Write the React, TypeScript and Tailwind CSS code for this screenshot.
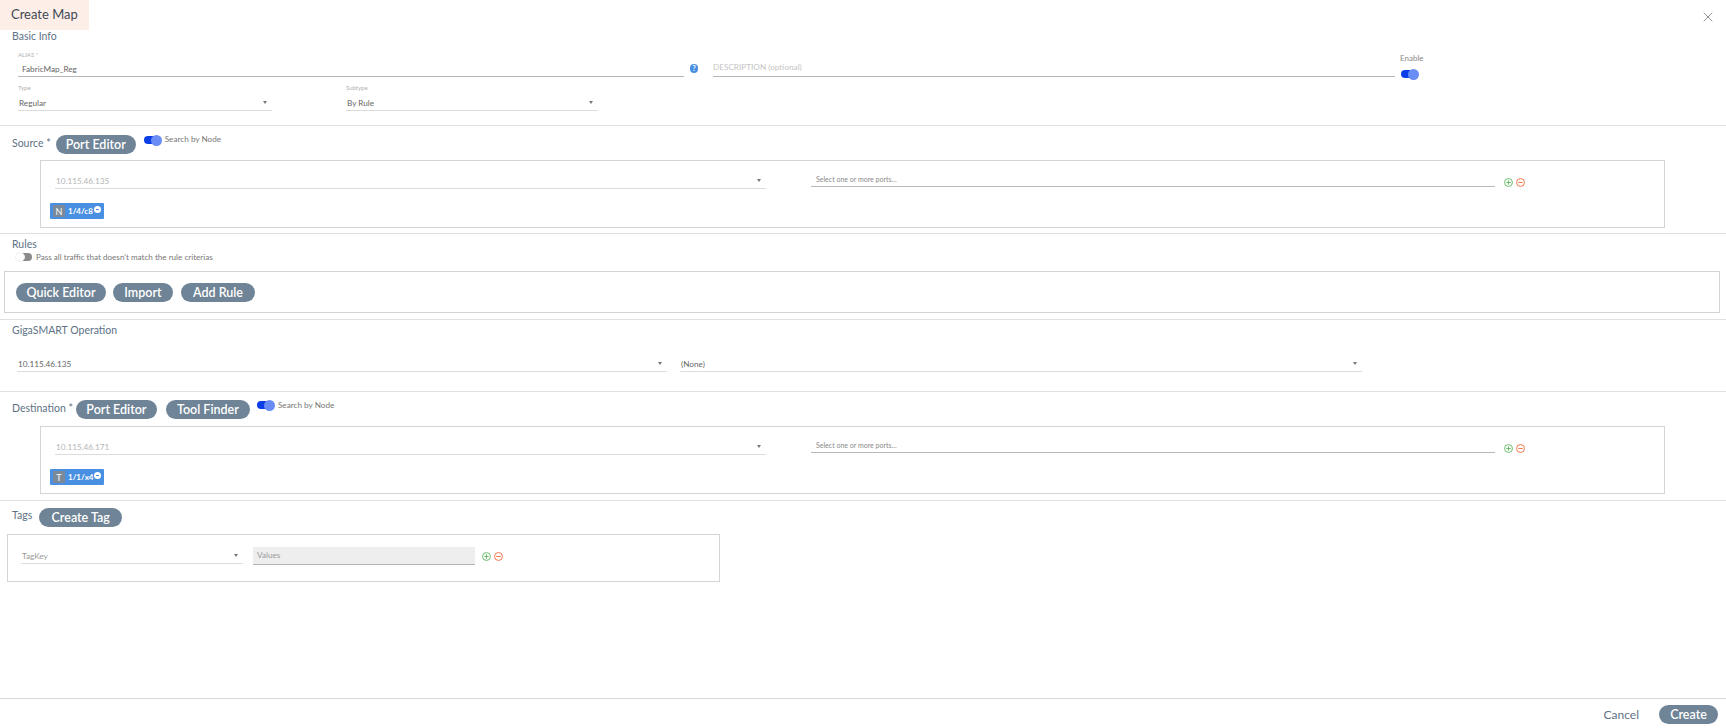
import React from 'react';
import { X } from 'lucide-react';

function Pill({ children, className = '' }: { children: React.ReactNode; className?: string }) {
  return (
    <button className={`h-[19px] rounded-full bg-[#6f8496] text-[12.5px] font-semibold leading-[19px] text-white ${className}`}>
      {children}
    </button>
  );
}

function Toggle({ on = true }: { on?: boolean }) {
  if (!on) {
    return (
      <span className="relative block h-[8px] w-[16px] rounded-full bg-[#8a8a8a]">
        <span className="absolute -left-[1px] -top-[1px] h-[10px] w-[10px] rounded-full border border-[#f0f0f0] bg-white" />
      </span>
    );
  }
  return (
    <span className="relative block h-[8px] w-[16px] rounded-full bg-[#0b3fe6]">
      <span className="absolute -top-[1.5px] left-[7px] h-[11px] w-[11px] rounded-full bg-[#6a8df5]" />
    </span>
  );
}

function Caret() {
  return <span className="mb-[4px] h-0 w-0 self-end border-x-[2px] border-t-[3px] border-x-transparent border-t-[#777]" />;
}

function SelectLine({ value, muted = false, className = 'h-[22px]' }: { value: string; muted?: boolean; className?: string }) {
  return (
    <div className={`flex items-end justify-between border-b border-[#dcdcdc] pb-[2px] pr-[5px] pl-[1px] text-[8.2px] leading-[10px] ${muted ? 'text-[#b5b5b5]' : 'text-[#666]'} ${className}`}>
      <span>{value}</span>
      <Caret />
    </div>
  );
}

function PlusMinus() {
  return (
    <div className="flex gap-[3px]">
      <svg width="9" height="9" viewBox="0 0 10 10" fill="none" stroke="#5cb85c" strokeWidth="1">
        <circle cx="5" cy="5" r="4.4" />
        <path d="M2.5 5h5M5 2.5v5" />
      </svg>
      <svg width="9" height="9" viewBox="0 0 10 10" fill="none" stroke="#f4683c" strokeWidth="1">
        <circle cx="5" cy="5" r="4.4" />
        <path d="M2.5 5h5" />
      </svg>
    </div>
  );
}

function Chip({ letter, label }: { letter: string; label: string }) {
  return (
    <div className="flex h-[16px] w-[54px] items-center rounded-[1px] bg-[#4a90e2] pl-[3px] text-white">
      <span className="flex h-[12px] w-[12px] items-center justify-center bg-[#7b8a99] text-[9px] leading-none">{letter}</span>
      <span className="ml-[3px] text-[8px] font-bold">{label}</span>
      <span className="relative -top-[2px] ml-[1px] flex h-[7px] w-[7px] items-center justify-center rounded-full bg-white">
        <span className="h-[1px] w-[3px] bg-[#4a90e2]" />
      </span>
    </div>
  );
}

function PortBox({ node, letter, label }: { node: string; letter: string; label: string }) {
  return (
    <div className="ml-[40px] mr-[61px] h-[68px] border border-[#d4d4d4] pl-[9px]">
      <div className="flex items-start">
        <SelectLine value={node} muted className="ml-[5px] mt-[6px] h-[22px] w-[711px] pl-0" />
        <div className="ml-[45px] mt-[8px] flex h-[18px] w-[684px] items-end border-b border-[#b8b8b8] pb-[3px] pl-[5px] text-[7px] leading-[8px] text-[#8a8a8a]">
          Select one or more ports...
        </div>
        <div className="ml-[9px] mt-[17px]">
          <PlusMinus />
        </div>
      </div>
      <div className="mt-[14px]">
        <Chip letter={letter} label={label} />
      </div>
    </div>
  );
}

export default function App() {
  return (
    <div className="relative flex h-[728px] flex-col bg-white text-[#6a7a88] [font-family:Lato,sans-serif]">
      <X className="absolute right-[10px] top-[9px] h-[16px] w-[16px] text-[#777]" strokeWidth={1.2} />

      <div className="flex h-[30px] w-[89px] items-center bg-[#fdeee8] pl-[11px] text-[13px] text-[#3e4a54]">Create Map</div>

      {/* Basic info */}
      <section className="h-[96px] border-b border-[#e0e0e0]">
        <h2 className="pl-[12px] text-[10.5px] leading-[13px] text-[#5e7285]">Basic Info</h2>
        <div className="mt-[8px] flex items-start pl-[18px]">
          <div className="w-[666px]">
            <div className="text-[6px] leading-[8px] text-[#b0b0b0]">ALIAS *</div>
            <div className="h-[18px] border-b border-[#b5b5b5] pl-[4px] pt-[3px] text-[8.2px] leading-[14px] text-[#666]">FabricMap_Reg</div>
          </div>
          <span className="ml-[6px] mt-[13px] flex h-[9px] w-[8px] items-center justify-center rounded-full bg-[#4a90e2] text-[7px] font-bold leading-none text-white">?</span>
          <div className="ml-[15px] mt-[8px] h-[18px] w-[682px] border-b border-[#b5b5b5] pt-[1px] text-[8.2px] leading-[14px] text-[#c4c4c4]">DESCRIPTION (optional)</div>
          <div className="ml-[5px] mt-[2px]">
            <div className="text-[8px] leading-[10px] text-[#888]">Enable</div>
            <div className="ml-[1px] mt-[7px]"><Toggle /></div>
          </div>
        </div>
        <div className="mt-[6px] flex pl-[18px]">
          <div className="w-[254px]">
            <div className="text-[6px] leading-[8px] text-[#b0b0b0]">Type</div>
            <SelectLine value="Regular" className="h-[19px]" />
          </div>
          <div className="ml-[74px] w-[252px]">
            <div className="text-[6px] leading-[8px] text-[#b0b0b0]">Subtype</div>
            <SelectLine value="By Rule" className="h-[19px]" />
          </div>
        </div>
      </section>

      {/* Source */}
      <section className="h-[108px] border-b border-[#e0e0e0]">
        <div className="flex h-[34px] items-start pl-[12px] pt-[9px]">
          <span className="mt-[2px] text-[10.5px] leading-[13px] text-[#5e7285]">Source *</span>
          <Pill className="ml-[5px] w-[80px]">Port Editor</Pill>
          <span className="ml-[8px] mt-[1px]"><Toggle /></span>
          <span className="-mt-[1px] ml-[5px] text-[8.2px] leading-[10px] text-[#777]">Search by Node</span>
        </div>
        <PortBox node="10.115.46.135" letter="N" label="1/4/c8" />
      </section>

      {/* Rules */}
      <section className="h-[86px] border-b border-[#e0e0e0]">
        <h2 className="pl-[12px] pt-[4px] text-[10.5px] leading-[13px] text-[#5e7285]">Rules</h2>
        <div className="flex h-[12px] items-center pl-[16px]">
          <Toggle on={false} />
          <span className="ml-[4px] text-[8.1px] text-[#777]">Pass all traffic that doesn't match the rule criterias</span>
        </div>
        <div className="ml-[4px] mr-[6px] mt-[8px] flex h-[42px] items-center gap-[7px] border border-[#d4d4d4] pl-[11px]">
          <Pill className="w-[90px]">Quick Editor</Pill>
          <Pill className="w-[60px]">Import</Pill>
          <Pill className="ml-[1px] w-[74px]">Add Rule</Pill>
        </div>
      </section>

      {/* GigaSMART */}
      <section className="h-[72px] border-b border-[#e0e0e0]">
        <h2 className="pl-[12px] pt-[4px] text-[10.5px] leading-[13px] text-[#5e7285]">GigaSMART Operation</h2>
        <div className="mt-[13px] flex gap-[13px] pl-[17px]">
          <SelectLine value="10.115.46.135" className="h-[22px] w-[650px]" />
          <SelectLine value="(None)" className="h-[22px] w-[682px]" />
        </div>
      </section>

      {/* Destination */}
      <section className="h-[109px] border-b border-[#e0e0e0]">
        <div className="flex h-[34px] items-start pl-[12px] pt-[8px]">
          <span className="mt-[2px] text-[10.5px] leading-[13px] text-[#5e7285]">Destination *</span>
          <Pill className="ml-[3px] w-[81px]">Port Editor</Pill>
          <Pill className="ml-[9px] w-[84px]">Tool Finder</Pill>
          <span className="ml-[7px] mt-[1px]"><Toggle /></span>
          <span className="ml-[5px] text-[8.2px] leading-[10px] text-[#777]">Search by Node</span>
        </div>
        <PortBox node="10.115.46.171" letter="T" label="1/1/x4" />
      </section>

      {/* Tags */}
      <section className="flex-1">
        <div className="flex h-[33px] items-start pl-[12px] pt-[7px]">
          <span className="mt-[1px] text-[10.5px] leading-[13px] text-[#5e7285]">Tags</span>
          <Pill className="ml-[7px] w-[83px]">Create Tag</Pill>
        </div>
        <div className="ml-[7px] flex h-[48px] w-[713px] items-start border border-[#d4d4d4] pl-[13px] pt-[6px]">
          <SelectLine value="TagKey" className="mt-[1px] h-[22px] w-[222px] pl-0 !text-[#9a9a9a]" />
          <div className="ml-[10px] mt-[6px] flex h-[18px] w-[222px] items-center border-b border-[#b5b5b5] bg-[#eeeeee] pl-[4px] text-[8.2px] text-[#9a9a9a]">Values</div>
          <div className="ml-[7px] mt-[11px]"><PlusMinus /></div>
        </div>
      </section>

      {/* Footer */}
      <footer className="flex h-[30px] items-center justify-end border-t border-[#d8d8d8] pr-[8px] pt-[2px]">
        <button className="text-[12px] text-[#5e7285]">Cancel</button>
        <Pill className="ml-[20px] w-[59px]">Create</Pill>
      </footer>
    </div>
  );
}
